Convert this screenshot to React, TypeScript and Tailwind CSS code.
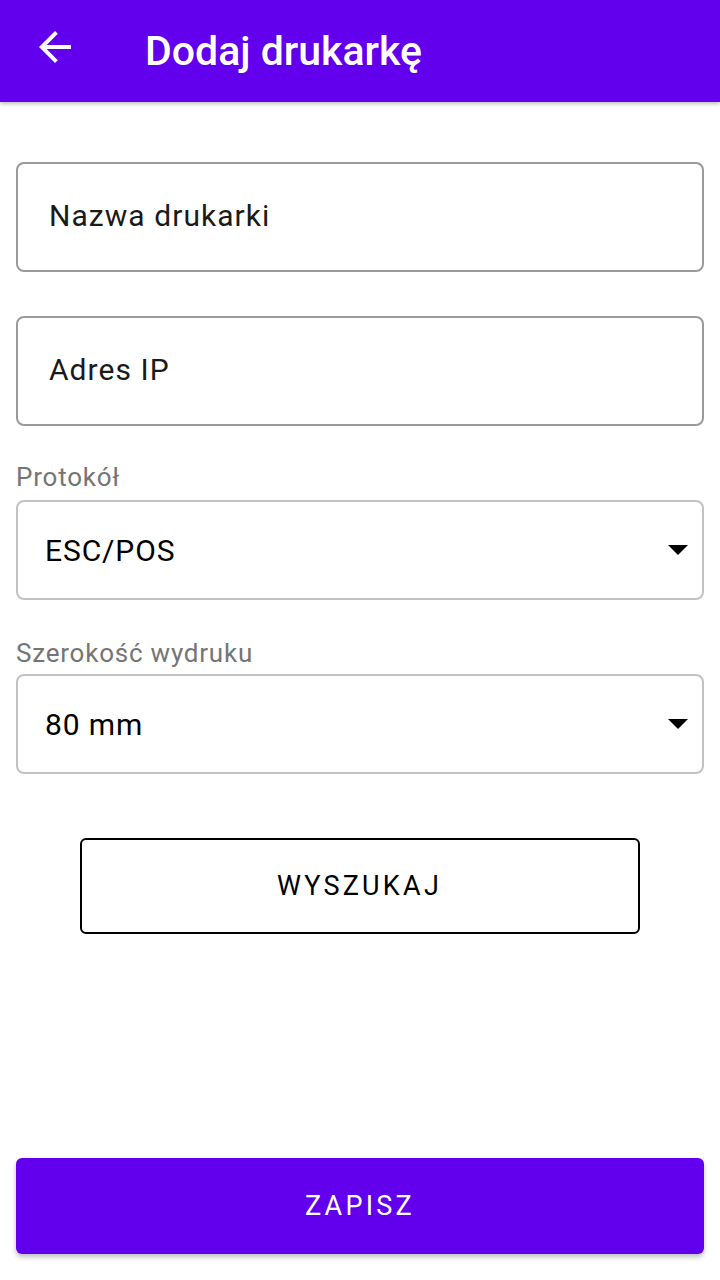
import React from "react";

function Caret() {
  return (
    <svg width="20" height="10" viewBox="0 0 20 10" className="shrink-0">
      <path d="M0 0 L20 0 L10 10 Z" fill="#000" />
    </svg>
  );
}

export default function App() {
  return (
    <div className="w-[720px] h-[1280px] bg-white flex flex-col" style={{ fontFamily: "Roboto, 'Noto Sans', sans-serif" }}>
      <header className="h-[102px] bg-[#6200ee] flex items-center shadow-[0_2px_4px_rgba(0,0,0,0.25)] relative z-10">
        <div className="w-[48px] h-[48px] ml-[31px] mt-[-8px]">
          <svg width="48" height="48" viewBox="0 0 24 24">
            <path d="M20 11H7.83l5.59-5.59L12 4l-8 8 8 8 1.41-1.41L7.83 13H20v-2z" fill="#fff" />
          </svg>
        </div>
        <h1 className="ml-[66px] mt-[0px] text-white text-[41px] font-medium leading-none">Dodaj drukarkę</h1>
      </header>

      <main className="flex-1 flex flex-col px-4">
        <div className="mt-[60px] h-[110px] border-2 border-[#9a9a9a] rounded-[8px] flex items-center pl-[31px] pb-[4px]">
          <span className="text-[30px] tracking-[0.035em] text-[#1a1a1a]">Nazwa drukarki</span>
        </div>
        <div className="mt-[44px] h-[110px] border-2 border-[#9a9a9a] rounded-[8px] flex items-center pl-[31px] pb-[4px]">
          <span className="text-[30px] tracking-[0.035em] text-[#1a1a1a]">Adres IP</span>
        </div>

        <label className="mt-[36px] text-[26px] leading-[30px] tracking-[0.03em] text-[#757575]">Protokół</label>
        <div className="mt-[8px] h-[100px] border-2 border-[#c2c2c2] rounded-[8px] flex items-center justify-between pl-[27px] pr-[14px]">
          <span className="text-[30px] tracking-[0.03em] text-black">ESC/POS</span>
          <Caret />
        </div>

        <label className="mt-[38px] text-[26px] leading-[30px] tracking-[0.03em] text-[#757575]">Szerokość wydruku</label>
        <div className="mt-[6px] h-[100px] border-2 border-[#c2c2c2] rounded-[8px] flex items-center justify-between pl-[27px] pr-[14px]">
          <span className="text-[30px] tracking-[0.03em] text-black">80 mm</span>
          <Caret />
        </div>

        <div className="mt-[64px] flex justify-center">
          <button className="w-[560px] h-[96px] ml-[-1px] border-2 border-black rounded-[6px] text-[27px] font-normal tracking-[0.12em] text-black">
            WYSZUKAJ
          </button>
        </div>

        <div className="flex-1" />

        <button className="mb-[26px] h-[96px] w-full bg-[#6200ee] rounded-[6px] shadow-[0_3px_5px_rgba(0,0,0,0.25)] text-white text-[27px] font-normal tracking-[0.12em]">
          ZAPISZ
        </button>
      </main>
    </div>
  );
}
